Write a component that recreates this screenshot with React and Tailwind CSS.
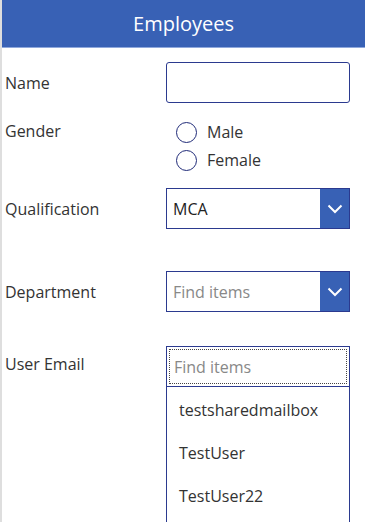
import React from 'react'

const font = { fontFamily: '"Open Sans", "Noto Sans", sans-serif' }

function Chevron() {
  return (
    <svg width="16" height="10" viewBox="0 0 16 10" fill="none">
      <path d="M1.5 1.5 L8 8 L14.5 1.5" stroke="white" strokeWidth="2" />
    </svg>
  )
}

function Row({ label, children, className = '' }) {
  return (
    <div className={`flex ${className}`}>
      <div className="w-[164px] pl-[3px] text-[16px] text-[#333]">{label}</div>
      <div className="w-[184px]">{children}</div>
    </div>
  )
}

function Radio({ label }) {
  return (
    <div className="flex items-center h-[28px] pl-[10px]">
      <span className="w-[21px] h-[21px] rounded-full border-[1.5px] border-[#1f2a78]" />
      <span className="ml-[10px] text-[16px] text-[#333]">{label}</span>
    </div>
  )
}

function Dropdown({ value, placeholder }) {
  return (
    <div className="flex h-[41px] border border-[#2b3a8f]">
      <div className={`flex-1 flex items-center pl-[6px] text-[16px] ${value ? 'text-[#222]' : 'text-[#888]'}`}>
        {value || placeholder}
      </div>
      <div className="w-[29px] bg-[#3861b5] flex items-center justify-center">
        <Chevron />
      </div>
    </div>
  )
}

export default function App() {
  return (
    <div className="w-[365px] h-[522px] overflow-hidden bg-white flex items-start" style={font}>
      <div className="w-[2px] h-full bg-[#dedede] shrink-0" />
      <div className="flex-1">
        <div className="h-[48px] bg-[#3861b5] border-b border-[#8fa8dc] flex items-center justify-center text-white text-[20px]">
          Employees
        </div>

        <Row label="Name" className="mt-[14px] items-center">
          <div className="h-[41px] border-[1.5px] border-[#2b3a8f] rounded-[3px]" />
        </Row>

        <Row label={<div className="pt-[1px]">Gender</div>} className="mt-[15px]">
          <Radio label="Male" />
          <Radio label="Female" />
        </Row>

        <Row label="Qualification" className="mt-[14px] items-center">
          <Dropdown value="MCA" />
        </Row>

        <Row label="Department" className="mt-[42px] items-center">
          <Dropdown placeholder="Find items" />
        </Row>

        <Row label={<div className="pt-[6px]">User Email</div>} className="mt-[34px]">
          <div className="border-x border-[#2b3a8f] h-[200px]">
            <div className="h-[41px] border-y border-[#2b3a8f] p-[2px]">
              <div className="h-full border border-dotted border-[#444] flex items-center pl-[4px] text-[16px] text-[#888]">
                Find items
              </div>
            </div>
            <div className="text-[16px] text-[#333] pl-[12px]">
              <div className="h-[43px] flex items-center mt-[1px]">testsharedmailbox</div>
              <div className="h-[43px] flex items-center">TestUser</div>
              <div className="h-[43px] flex items-center">TestUser22</div>
            </div>
          </div>
        </Row>
      </div>
    </div>
  )
}
